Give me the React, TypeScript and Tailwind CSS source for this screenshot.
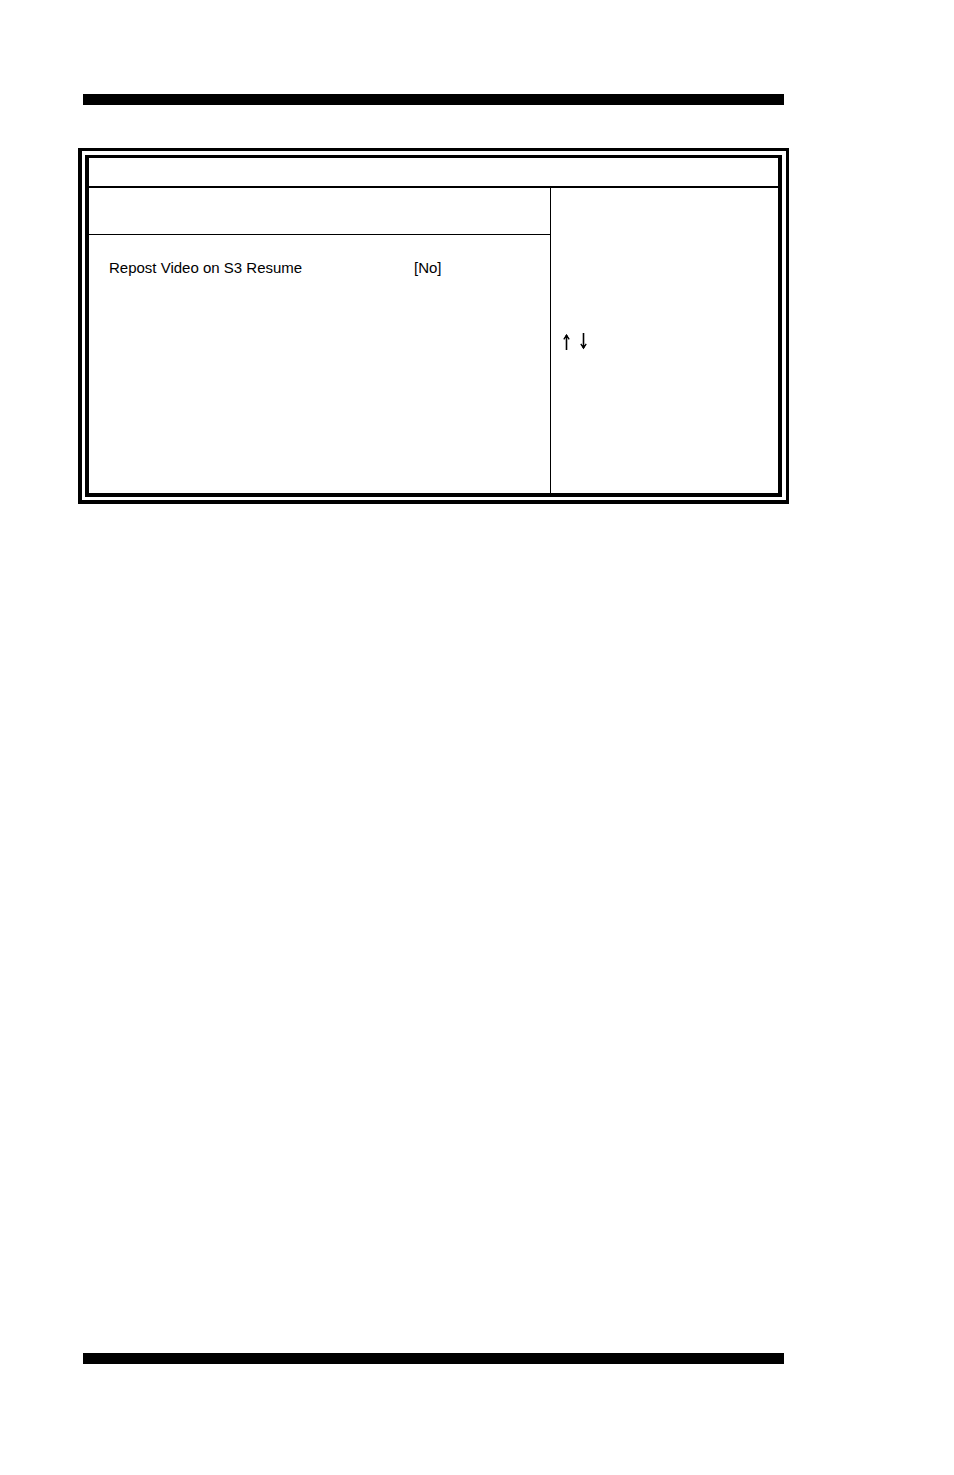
function ArrowUp() {
  return (
    <svg role="img" aria-label="Up" viewBox="0 0 9 18" className="h-[18px] w-[9px]" fill="none" stroke="black">
      <path d="M4.5 17V2" strokeWidth="1.6" />
      <path d="M1.8 6.4 4.5 2.2 7.2 6.4" strokeWidth="1.3" />
      <path d="M4.5 1 6.6 5.4 4.5 4.6 2.4 5.4Z" fill="black" stroke="none" />
    </svg>
  );
}

function ArrowDown() {
  return (
    <svg role="img" aria-label="Down" viewBox="0 0 9 18" className="h-[18px] w-[9px]" fill="none" stroke="black">
      <path d="M4.5 0V15" strokeWidth="1.6" />
      <path d="M1.8 10.8 4.5 15 7.2 10.8" strokeWidth="1.3" />
      <path d="M4.5 16.2 6.6 11.8 4.5 12.6 2.4 11.8Z" fill="black" stroke="none" />
    </svg>
  );
}

function Rule() {
  return <div className="mx-[5px] h-[11px] shrink-0 bg-black" />;
}

export default function App() {
  return (
    <div className="flex min-h-screen flex-col bg-white pt-[94px] pr-[165px] pb-[111px] pl-[78px] font-['Liberation_Sans',Arial,sans-serif] text-[15px] leading-5 text-black">
      <Rule />
      <main className="mt-[43px] mb-10 border-t-3 border-r-3 border-b-4 border-l-4 border-black pt-1 pr-1 pb-[3px] pl-[3px]">
        <section className="border-t-3 border-r-4 border-b-4 border-l-4 border-black">
          <header className="h-[30px] border-b-2 border-black" />
          <div className="grid min-h-[305px] grid-cols-[462fr_227fr]">
            <div className="border-r border-black">
              <div className="h-[47px] border-b border-black" />
              <dl className="grid grid-cols-[305fr_136fr] pt-[23px] pl-5">
                <dt>Repost Video on S3 Resume</dt>
                <dd>[No]</dd>
              </dl>
            </div>
            <aside className="flex items-start gap-2 pt-[145px] pl-[11px]">
              <ArrowUp />
              <ArrowDown />
            </aside>
          </div>
        </section>
      </main>
      <div className="mt-auto">
        <Rule />
      </div>
    </div>
  );
}
